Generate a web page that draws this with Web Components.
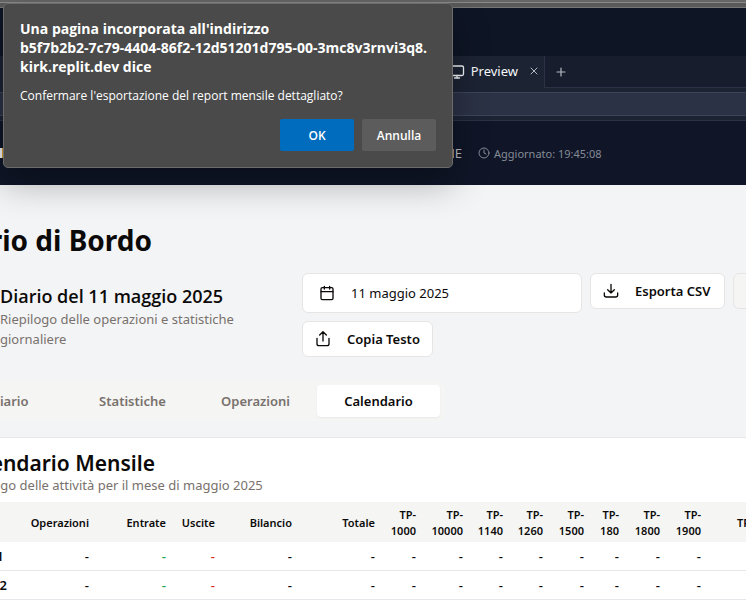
<!DOCTYPE html>
<html lang="it">
<head>
<meta charset="utf-8">
<title>Diario di Bordo</title>
<style>
  html, body { margin: 0; height: 100%; overflow: hidden; }
  body { font-family: "Noto Sans", "Open Sans", sans-serif; font-size: 13px; color: #0c0a09; background: #f3f4f6; }
</style>
</head>
<body>
<app-shell>
  <browser-chrome slot="chrome"></browser-chrome>
  <status-header slot="header" status="ONLINE" updated="19:45:08"></status-header>
  <log-toolbar heading="Diario del 11 maggio 2025" subtitle="Riepilogo delle operazioni e statistiche giornaliere" date="11 maggio 2025"></log-toolbar>
  <view-tabs items="Diario,Statistiche,Operazioni,Calendario" active="Calendario"></view-tabs>
  <month-card></month-card>
</app-shell>
<confirm-dialog role="dialog" aria-label="Conferma">
  <span slot="title">Una pagina incorporata all'indirizzo<br>b5f7b2b2-7c79-4404-86f2-12d51201d795-00-3mc8v3rnvi3q8.<br>kirk.replit.dev dice</span>
  <span slot="message">Confermare l'esportazione del report mensile dettagliato?</span>
</confirm-dialog>

<script>
class Base extends HTMLElement {
  connectedCallback() {
    this.attachShadow({ mode: 'open' }).innerHTML =
      `<style>*{box-sizing:border-box}button,input{font:inherit;color:inherit;margin:0}svg{display:block;flex:none;fill:none;stroke:currentColor;stroke-linecap:round;stroke-linejoin:round}</style>` + this.render();
  }
  render() { return ''; }
}

customElements.define('app-shell', class extends Base {
  render() {
    return `<style>
      :host { display: block; height: 100vh; overflow: hidden; }
      main { margin-left: -56px; margin-right: -160px; }
      h1 { margin: 0; padding: 37px 0 15px; font-size: 28px; line-height: 36px; font-weight: 700; }
    </style>
    <slot name="chrome"></slot><slot name="header"></slot>
    <main><h1>Diario di Bordo</h1><slot></slot></main>`;
  }
});

customElements.define('browser-chrome', class extends Base {
  render() {
    return `<style>
      :host { display: block; background: #0e1525; color: #f5f9fc; }
      .frame { height: 8px; background: linear-gradient(#666 2px, #8a8a8a 2px 3px, #5a5a5a 3px 7px, #777 7px); }
      .strip { margin-top: 48px; display: grid; grid-template-columns: 545px 1fr; height: 32px; background: #171d2c; }
      .tab { display: flex; justify-content: flex-end; align-items: center; gap: 6px; background: #1c2333; border-right: 1px solid #2b3245; padding: 0 4px 2px 0; }
      .rest { border-bottom: 1px solid #2b3245; display: flex; align-items: center; padding-left: 10px; }
      button { border: 0; background: none; padding: 0; display: flex; color: #b4bac4; }
      .close { padding: 0 0 0 4px; }
      .bar { background: #1c2333; padding: 4px 0; border-bottom: 1px solid #2b3245; }
      input { display: block; width: 100%; height: 24px; border: solid #3c445c; border-width: 1px 0; background: #2b3245; padding: 0 12px; outline: 0; }
    </style>
    <div class="frame"></div>
    <div class="strip">
      <div class="tab">
        <svg width="16" height="16" viewBox="0 0 16 16" stroke="#c2c8cc" stroke-width="1.3"><rect x="1.5" y="3" width="13" height="9.5" rx="1.5"/><path d="M8 12.5v2.3M5.5 15h5"/></svg>
        <span>Preview</span>
        <button class="close" aria-label="Chiudi scheda"><svg width="12" height="12" viewBox="0 0 12 12"><path d="M3 3l6 6M9 3l-6 6"/></svg></button>
      </div>
      <div class="rest"><button aria-label="Nuova scheda"><svg width="12" height="12" viewBox="0 0 12 12" stroke-width="1.2"><path d="M6 2v8M2 6h8"/></svg></button></div>
    </div>
    <div class="bar"><input type="text" aria-label="Indirizzo"></div>`;
  }
});

customElements.define('status-header', class extends Base {
  render() {
    return `<style>
      :host { display: grid; grid-template-columns: 462px 1fr; gap: 16px; align-items: center; height: 64px; background: #101628; color: #b9bcc2; }
      .left { display: flex; justify-content: space-between; align-items: center; }
      .mark { width: 6px; height: 10px; background: linear-gradient(90deg, #f0f0f0 2px, #d9a032 2px); }
      .time { display: flex; align-items: center; gap: 4px; font-size: 11px; color: #858b96; }
    </style>
    <div class="left"><span class="mark"></span><span>${this.getAttribute('status')}</span></div>
    <div class="time"><svg width="12" height="12" viewBox="0 0 24 24" stroke-width="2"><circle cx="12" cy="12" r="10"/><path d="M12 6v6l4 2"/></svg><span>Aggiornato: ${this.getAttribute('updated')}</span></div>`;
  }
});

customElements.define('log-toolbar', class extends Base {
  render() {
    const a = n => this.getAttribute(n);
    return `<style>
      :host { display: grid; grid-template-columns: 294px 1fr; gap: 8px; padding-left: 56px; }
      .text { padding-top: 10px; }
      h2 { margin: 0; font-family: "Open Sans", sans-serif; font-size: 18px; line-height: 26px; font-weight: 600; }
      p { margin: 0; line-height: 20px; color: #78716c; }
      .actions { display: flex; flex-wrap: wrap; align-items: flex-start; gap: 8px; }
      button { display: flex; align-items: center; background: #fff; border: 1px solid #e7e5e4; border-radius: 6px; height: 36px; padding: 0 12px; gap: 16px; font-weight: 600; white-space: nowrap; }
      .date { width: 280px; height: 40px; padding: 0 16px; font-weight: 400; }
      .export { min-width: 135px; }
      .muted { background: #f5f5f4; color: #a8a29e; padding: 0 16px; }
    </style>
    <div class="text"><h2>${a('heading')}</h2><p>${a('subtitle')}</p></div>
    <div class="actions">
      <button class="date"><svg width="16" height="16" viewBox="0 0 24 24" stroke-width="2"><rect x="3" y="4" width="18" height="18" rx="2"/><path d="M8 2v4M16 2v4M3 10h18"/></svg>${a('date')}</button>
      <button class="export"><svg width="16" height="16" viewBox="0 0 24 24" stroke-width="2"><path d="M2 15v3q0 3 3 3h14q3 0 3-3v-3M12 2v13M7 10l5 5 5-5"/></svg>Esporta CSV</button>
      <button class="muted">Report Mensile</button>
      <button><svg width="16" height="16" viewBox="0 0 24 24" stroke-width="2"><path d="M3 11v8q0 3 3 3h12q3 0 3-3v-8M12 15V2M7 6l5-5 5 5"/></svg>Copia Testo</button>
    </div>`;
  }
});

customElements.define('view-tabs', class extends Base {
  render() {
    const active = this.getAttribute('active');
    const tabs = this.getAttribute('items').split(',').map(t =>
      `<button role="tab" aria-selected="${t === active}">${t}</button>`).join('');
    return `<style>
      :host { display: block; margin-top: 24px; }
      div { display: grid; grid-template-columns: repeat(4, 1fr); width: 500px; padding: 4px; background: #f5f5f4; border-radius: 6px; }
      button { height: 32px; border: 0; border-radius: 4px; background: none; color: #78716c; font-weight: 600; padding: 0; }
      button[aria-selected="true"] { background: #fff; color: #0c0a09; box-shadow: 0 1px 2px #0000000d; }
    </style><div role="tablist">${tabs}</div>`;
  }
});

customElements.define('month-card', class extends Base {
  render() {
    const codes = ['1000', '10000', '1140', '1260', '1500', '180', '1800', '1900'];
    const widths = [78, 74, 77, 49, 77, 83, 41, 47, 40, 40, 41, 35, 41, 41];
    const row = d => `<tr><th scope="row">${d}</th>${Array.from({ length: 14 }, (_, i) =>
      `<td${i === 1 ? ' class="in"' : i === 2 ? ' class="out"' : ''}>-</td>`).join('')}</tr>`;
    return `<style>
      :host { display: block; margin-top: 16px; background: #fff; border: 1px solid #e5e7eb; padding: 13px 0 60px; }
      h2, p { margin: 0; padding-left: 14px; }
      h2 { font-size: 21px; line-height: 25px; font-weight: 600; }
      p { line-height: 18px; color: #78716c; padding-bottom: 8px; }
      table { border-collapse: separate; border-spacing: 0; table-layout: fixed; width: 100%; }
      th, td { text-align: right; padding: 0 8px 0 0; }
      thead th { background: #f5f5f4; height: 40px; padding-top: 1px; font-size: 11px; line-height: 16px; font-weight: 600; }
      thead th:first-child { text-align: left; padding-left: 14px; }
      thead th:last-child { text-align: left; padding-left: 28px; }
      tbody th, tbody td { height: 29px; line-height: 18px; border-bottom: 1px solid #e5e7eb; }
      tbody th { text-align: left; padding: 0 0 0 28px; font-weight: 600; white-space: nowrap; }
      td { font-weight: 500; }
      .in { color: #16a34a; } .out { color: #dc2626; }
    </style>
    <h2>Calendario Mensile</h2><p>Riepilogo delle attività per il mese di maggio 2025</p>
    <table>
      <colgroup>${widths.map(w => `<col style="width:${w}px">`).join('')}<col></colgroup>
      <thead><tr><th scope="col">Data</th>${['Operazioni', 'Entrate', 'Uscite', 'Bilancio', 'Totale'].map(t => `<th scope="col">${t}</th>`).join('')}${codes.map(c => `<th scope="col">TP-<br>${c}</th>`).join('')}<th scope="col">TP-2000</th></tr></thead>
      <tbody>${row('gio 1')}${row('ven 2')}</tbody>
    </table>`;
  }
});

customElements.define('confirm-dialog', class extends Base {
  render() {
    return `<style>
      :host { position: absolute; top: 3px; left: 3px; width: 450px; box-sizing: border-box; background: #4a4a4a; color: #fff; border: 1px solid #6b6b6b; border-radius: 5px; padding: 15px 16px 16px; font-family: "Open Sans", sans-serif; box-shadow: 0 14px 36px #00000052; }
      h2 { margin: 0; font-size: 14px; line-height: 19px; font-weight: 700; }
      p { margin: 10px 0 14px; font-size: 12px; line-height: 19px; }
      div { display: flex; justify-content: flex-end; gap: 8px; }
      button { width: 74px; height: 32px; border: 0; border-radius: 2px; background: #5c5c5c; font-size: 12px; font-weight: 600; padding: 0; }
      .ok { background: #006cbe; }
    </style>
    <h2><slot name="title"></slot></h2><p><slot name="message"></slot></p>
    <div><button class="ok">OK</button><button>Annulla</button></div>`;
  }
});
</script>
</body>
</html>
